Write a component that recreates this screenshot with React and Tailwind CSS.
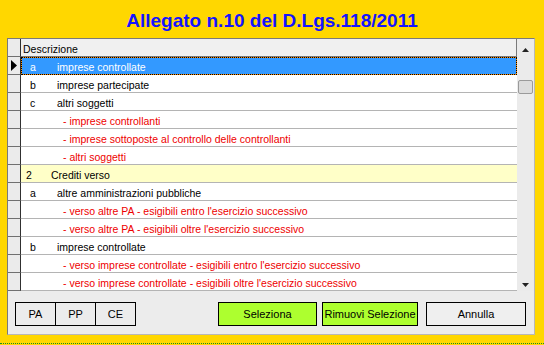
import React from "react";

const rows = [
  { kind: "item", code: "a", text: "imprese controllate", selected: true },
  { kind: "item", code: "b", text: "imprese partecipate" },
  { kind: "item", code: "c", text: "altri soggetti" },
  { kind: "sub", text: "- imprese controllanti" },
  { kind: "sub", text: "- imprese sottoposte al controllo delle controllanti" },
  { kind: "sub", text: "- altri soggetti" },
  { kind: "group", code: "2", text: "Crediti verso" },
  { kind: "item", code: "a", text: "altre amministrazioni pubbliche" },
  { kind: "sub", text: "- verso altre PA - esigibili entro l'esercizio successivo" },
  { kind: "sub", text: "- verso altre PA - esigibili oltre l'esercizio successivo" },
  { kind: "item", code: "b", text: "imprese controllate" },
  { kind: "sub", text: "- verso imprese controllate - esigibili entro l'esercizio successivo" },
  { kind: "sub", text: "- verso imprese controllate - esigibili oltre l'esercizio successivo" },
];

// content of one grid row
function RowContent({ row }) {
  if (row.kind === "sub") {
    return <span className="pl-[42px] text-[#ee0000]">{row.text}</span>;
  }
  if (row.kind === "group") {
    return (
      <>
        <span className="w-[30px] pl-[5px]">{row.code}</span>
        <span>{row.text}</span>
      </>
    );
  }
  return (
    <>
      <span className="w-[36px] pl-[9px]">{row.code}</span>
      <span>{row.text}</span>
    </>
  );
}

function GridRow({ row }) {
  return (
    <div className="flex h-[18px]">
      <div className="flex w-[13px] shrink-0 items-center justify-center border-r border-b border-r-[#303030] border-b-[#707070] bg-[#ebebeb]">
        {row.selected && (
          <svg width="6" height="11" viewBox="0 0 6 11">
            <path d="M0 0 L6 5.5 L0 11 Z" fill="#000" />
          </svg>
        )}
      </div>
      {row.selected ? (
        <div className="flex-1 bg-[#ff8c00]">
          <div className="flex h-full border border-dotted border-black bg-[#3399ff] bg-clip-padding text-white">
            <div className="-ml-px flex pt-[3px] leading-[12px]">
              <RowContent row={row} />
            </div>
          </div>
        </div>
      ) : (
        <div
          className={
            "flex flex-1 border-b border-[#b4b4b4] pt-[4px] leading-[12px] text-black " +
            (row.kind === "group" ? "bg-[#ffffc8]" : "bg-white")
          }
        >
          <RowContent row={row} />
        </div>
      )}
    </div>
  );
}

function ScrollBar() {
  return (
    <div className="relative w-[17px] shrink-0 bg-[#ebebeb]">
      <svg className="absolute left-[5px] top-[9px]" width="7" height="4" viewBox="0 0 7 4">
        <path d="M0 4 L3.5 0 L7 4 Z" fill="#222" />
      </svg>
      <div className="absolute left-[1px] top-[41px] h-[14px] w-[15px] rounded-[2px] border border-[#9a9a9a] bg-[#dcdcdc]" />
      <svg className="absolute left-[5px] top-[244px]" width="7" height="4" viewBox="0 0 7 4">
        <path d="M0 0 L3.5 4 L7 0 Z" fill="#222" />
      </svg>
    </div>
  );
}

export default function App() {
  return (
    <div
      className="h-[345px] w-[544px] overflow-hidden bg-[#ffd700] text-[10.5px]"
      style={{ fontFamily: '"Liberation Sans", Arial, sans-serif' }}
    >
      <div className="h-[38px] pt-[11px] text-center text-[19px] font-bold leading-[19px] text-[#1414ff]">
        Allegato n.10 del D.Lgs.118/2011
      </div>

      <div className="ml-[7px] flex h-[297px] w-[528px] flex-col border border-t-[#7a7a7a] border-l-[#7a7a7a] border-r-[#b8b8b8] border-b-[#b8b8b8] bg-[#ececec]">
        <div className="flex h-[252px]">
          <div className="flex flex-1 flex-col">
            <div className="flex h-[18px]">
              <div className="w-[13px] shrink-0 border-r border-b border-r-[#303030] border-b-[#707070] bg-[#ebebeb]" />
              <div className="flex-1 border-r border-b border-[#7a7a7a] bg-[#f0f0f0] pl-[2px] pt-[4px] leading-[12px] text-black">
                Descrizione
              </div>
            </div>
            {rows.map((row, i) => (
              <GridRow key={i} row={row} />
            ))}
          </div>
          <ScrollBar />
        </div>

        <div className="flex items-start pt-[11px] text-[11px] leading-[22px] text-black">
          <div className="ml-[7px] flex h-[24px] w-[121px] border border-black">
            <div className="w-[40px] border-r border-black text-center">PA</div>
            <div className="w-[40px] border-r border-black text-center">PP</div>
            <div className="flex-1 text-center">CE</div>
          </div>
          <button className="ml-[82px] h-[24px] w-[99px] border border-black bg-[#adff2f] text-center">
            Seleziona
          </button>
          <button className="ml-[5px] h-[24px] w-[96px] border border-black bg-[#adff2f] text-center">
            Rimuovi Selezione
          </button>
          <button className="ml-[8px] h-[24px] w-[100px] border border-black bg-[#efefef] text-center">
            Annulla
          </button>
        </div>
      </div>

      <div className="mt-[8px] border-t border-dotted border-[#1e8c1e]" />
    </div>
  );
}
